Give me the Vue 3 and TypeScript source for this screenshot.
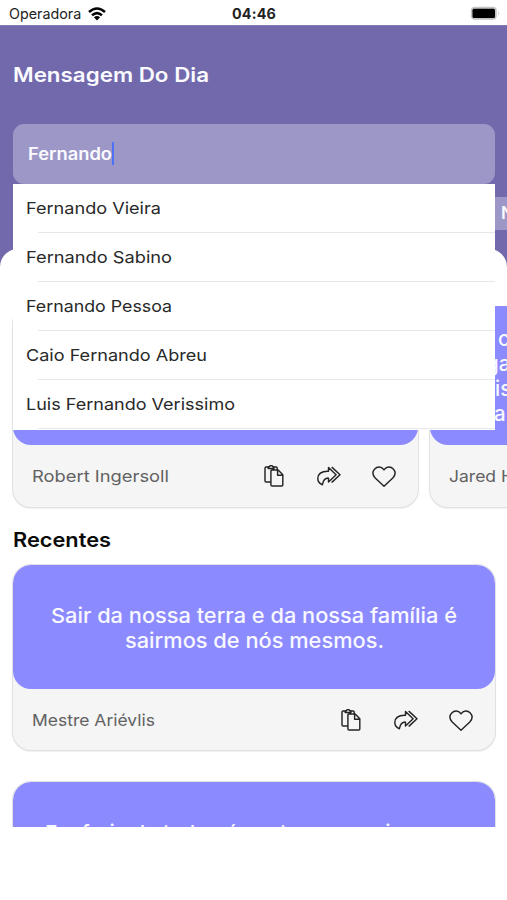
<script setup lang="ts">
interface TextRun { text: string; width: number }
interface Card { author: string; authorWidth: number; lines: TextRun[] }
const results: TextRun[] = [
  { text: 'Fernando Vieira', width: 135 },
  { text: 'Fernando Sabino', width: 146 },
  { text: 'Fernando Pessoa', width: 146 },
  { text: 'Caio Fernando Abreu', width: 181 },
  { text: 'Luis Fernando Verissimo', width: 209 },
]
const featured: Card = { author: 'Robert Ingersoll', authorWidth: 137, lines: [] }
const nextQuote = [
  { text: 'c', shift: 68 },
  { text: 'ga', shift: 56 },
  { text: 'is', shift: 65 },
  { text: 'a', shift: 64 },
]
const recent: Card[] = [
  {
    author: 'Mestre Ariévlis',
    authorWidth: 123,
    lines: [
      { text: 'Sair da nossa terra e da nossa família é', width: 406 },
      { text: 'sairmos de nós mesmos.', width: 259 },
    ],
  },
  {
    author: '',
    authorWidth: 0,
    lines: [{ text: 'Em feria de todo nós entramos mais como', width: 418 }],
  },
]
</script>

<template>
  <main class="screen">
    <svg class="sprites" aria-hidden="true">
      <symbol id="copy" viewBox="0 0 20 22">
        <path d="M6.2 17H2.1Q1 17 1 16V3.2Q1 2 2.1 2H4.2M10 2h2.1q1.1 0 1.1 1.2v1M4.2 1.7h1.2q.3-1.1 1.7-1.1t1.7 1.1H10v1.8H4.2ZM8.1 5h6.1l4.6 4.8V20q0 1-1 1H8.1q-1.2 0-1.2-1V6.2Q6.900 5 8.100 5ZM13.600 5.300V10.200H18.600" />
      </symbol>
      <symbol id="share" viewBox="0 0 24 20">
        <path d="M11.500 5.300V1.400l7.600 7.400-7.600 7.300v-4C7.900 11.900 6.300 13.800 5.400 18.700 2.200 17.500.8 15.300.8 12.500 1 7.600 5.300 5.100 11.500 5.300ZM15.100 1.400l7.900 7.400-7.900 7.300" />
      </symbol>
      <symbol id="heart" viewBox="0 0 24 21">
        <path d="M12 3.800C9.800.2 5.300.2 2.700 2.900.2 5.700.7 9.300 3.200 12L12 20.200 20.800 12c2.500-2.700 3-6.300.5-9.100C18.700.2 14.200.2 12 3.800Z" />
      </symbol>
    </svg>

    <header class="status">
      <span class="carrier">Operadora</span>
      <svg class="wifi" viewBox="0 0 18 14">
        <path d="M1 5Q9-2 17 5M4 8.300q5-4.300 10 0" />
        <path class="solid" d="M5.900 10.300q3.100-2.400 6.200 0L9 13.500Z" />
      </svg>
      <time class="clock">04:46</time>
      <svg class="battery" viewBox="0 0 31 15">
        <rect x=".8" y=".8" width="26" height="13" rx="4" />
        <rect class="charge" x="2.500" y="2.700" width="22.500" height="9.200" rx="1.500" />
        <path d="M28.300 5q2 2.300 0 4.600Z" />
      </svg>
    </header>

    <section class="hero">
      <h1><svg class="fit" height="28" width="200"><text x="0" y="20.500" textLength="196" lengthAdjust="spacingAndGlyphs">Mensagem Do Dia</text></svg></h1>
      <div class="field">
        <svg class="fit" height="26" width="84"><text x="0" y="19" textLength="84" lengthAdjust="spacingAndGlyphs">Fernando</text></svg><i class="caret"></i>
        <ul class="results">
          <li v-for="item in results" :key="item.text">
            <svg class="fit" height="26" width="240"><text x="0" y="18" :textLength="item.width" lengthAdjust="spacingAndGlyphs">{{ item.text }}</text></svg>
          </li>
        </ul>
      </div>
      <div class="chips"><span class="chip">N</span></div>
    </section>

    <section class="sheet">
      <div class="carousel">
        <article class="card featured">
          <div class="quote"></div>
          <footer>
            <svg class="fit author" height="26" width="150"><text x="0" y="19" :textLength="featured.authorWidth" lengthAdjust="spacingAndGlyphs">{{ featured.author }}</text></svg>
            <svg class="icon copy"><use href="#copy" /></svg>
            <svg class="icon share"><use href="#share" /></svg>
            <svg class="icon heart"><use href="#heart" /></svg>
          </footer>
        </article>
        <article class="card featured">
          <div class="quote start">
            <span v-for="line in nextQuote" :key="line.text" :style="{ paddingLeft: line.shift + 'px' }">{{ line.text }}</span>
          </div>
          <footer>
            <svg class="fit author" height="26" width="100"><text x="0" y="19" textLength="65" lengthAdjust="spacingAndGlyphs">Jared H</text></svg>
          </footer>
        </article>
      </div>

      <h2><svg class="fit" height="28" width="110"><text x="0" y="21" textLength="98" lengthAdjust="spacingAndGlyphs">Recentes</text></svg></h2>
      <article v-for="card in recent" :key="card.author" class="card recent">
        <div class="quote">
          <svg v-for="line in card.lines" :key="line.text" class="fit" height="25" :width="line.width"><text x="0" y="19" :textLength="line.width" lengthAdjust="spacingAndGlyphs">{{ line.text }}</text></svg>
        </div>
        <footer>
          <svg class="fit author" height="26" width="150"><text v-if="card.author" x="0" y="19" :textLength="card.authorWidth" lengthAdjust="spacingAndGlyphs">{{ card.author }}</text></svg>
          <svg class="icon copy"><use href="#copy" /></svg>
          <svg class="icon share"><use href="#share" /></svg>
          <svg class="icon heart"><use href="#heart" /></svg>
        </footer>
      </article>
    </section>
  </main>
</template>

<style>
body { margin: 0; background: #fff; }
</style>
<style scoped>
* { box-sizing: border-box; }
.screen { width: 507px; height: 827px; overflow: hidden; background: #fff; font-family: Inter, sans-serif; }
.sprites { display: none; }
.fit { display: block; overflow: visible; flex: none; }
.fit text { fill: currentColor; }
.status { height: 25px; display: grid; grid-template-columns: 79px 18px 1fr 31px; align-items: center; padding: 2px 6px 0 9px; color: #222; font-size: 14.300px; }
.wifi { width: 18px; height: 14px; fill: none; stroke: #050505; stroke-width: 2.500; }
.wifi .solid { fill: #050505; stroke: none; }
.clock { font-size: 14.300px; font-weight: 700; letter-spacing: .2px; margin-left: 126px; }
.battery { width: 31px; height: 15px; fill: #c4c4c4; }
.battery .charge { fill: #000; }
.hero { height: 242px; background: #7169ab; padding: 35px 12.500px 0 13px; color: #fafaff; border-top: 1px solid #827bb4; }
h1, h2 { margin: 0; font-size: 20px; font-weight: 600; }
h1 { height: 62.500px; }
h1 .fit { margin-left: 0; }
.field { position: relative; height: 60.500px; border-radius: 11px; background: #9c97c6; display: flex; align-items: center; padding-left: 15px; font-size: 16.800px; font-weight: 600; }
.caret { width: 2px; height: 23px; background: #4c72f5; }
.results { position: absolute; z-index: 2; left: 0; right: 0; top: 60.500px; height: 246px; margin: 0; padding: 0; list-style: none; background: #fff; color: #292929; font-weight: 400; font-size: 16.500px; }
.results li { height: 49px; padding: 12px 0 0 12.500px; background: linear-gradient(#e7e7e9, #e7e7e9) 25px 48px / 457px 1px no-repeat; }
.chips { display: flex; justify-content: flex-end; margin: 13px -12.500px 0 0; }
.chip { width: 30px; height: 33px; background: #9c97c6; line-height: 33px; padding-left: 24px; overflow: hidden; font-size: 17px; font-weight: 600; }
.sheet { position: relative; margin-top: -18px; height: 700px; padding: 57px 12px 0 13px; background: #fff; border-radius: 18px 18px 0 0; }
.carousel { display: flex; gap: 12px; margin: 0 -12px 0 -1px; overflow: hidden; padding: 0 0 3px 1px; }
.card { overflow: hidden; background: #f5f5f5; border-radius: 18px; box-shadow: 0 0 0 1px #e0e0e5, 0 1px 2px #cfcfd3; }
.quote { background: #8c8aff; border-radius: 18px; color: #f8f8ff; font-size: 20.500px; font-weight: 450; display: flex; flex-direction: column; align-items: center; }
.featured { flex: 0 0 405px; height: 201px; }
.featured .quote { height: 139px; }
.quote.start { align-items: flex-start; padding-top: 20px; line-height: 25px; font-weight: 500; }
.card footer { height: 62px; display: flex; align-items: center; padding: 0 22px 0 18.500px; color: #626262; font-size: 16.500px; }
.author { margin-right: auto; }
.icon { flex: none; fill: none; stroke: #252525; stroke-width: 1.450; stroke-linejoin: round; stroke-linecap: round; }
.copy { width: 20px; height: 22px; margin-right: 33px; }
.share { width: 24px; height: 20px; margin-right: 31px; }
.heart { width: 24px; height: 21px; }
h2 { height: 55px; padding-top: 16px; color: #0b0b0b; }
h2 .fit { margin-left: 0; }
.recent { height: 185px; margin-bottom: 32px; }
.recent .quote { height: 124px; padding-top: 38.500px; }
</style>
